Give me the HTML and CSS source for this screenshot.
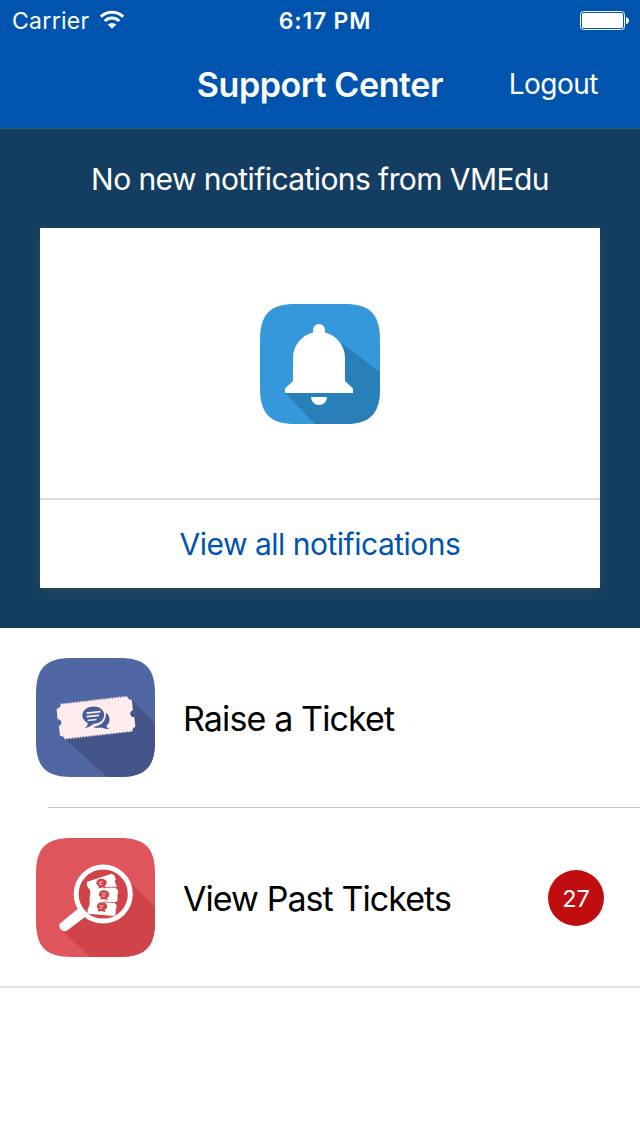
FILE: index.html
```html
<!DOCTYPE html>
<html lang="en">
<head>
<meta charset="utf-8">
<title>Support Center</title>
<link rel="stylesheet" href="styles.css">
</head>
<body>
<header class="header">
  <div class="status">
    <div class="status-left">
      <span class="carrier">Carrier</span>
      <svg class="wifi" width="26" height="20" viewBox="0 0 26 20">
        <path d="M1.8 6.800a16 16 0 0 1 22.400 0M5.700 11a10.500 10.500 0 0 1 14.600 0" fill="none" stroke="#fff" stroke-width="3"/>
        <path d="M13 18.800 8.700 14.600a6.300 6.300 0 0 1 8.600 0Z" fill="#fff"/>
      </svg>
    </div>
    <span class="time">6:17 PM</span>
    <div class="status-right">
      <svg width="50" height="20" viewBox="0 0 50 20">
        <rect x=".5" y=".5" width="44" height="18" rx="3" fill="none" stroke="#fff"/>
        <rect x="2" y="2" width="41" height="15" rx="1.6" fill="#fff"/>
        <path d="M46 6.200c4 .5 4 6.300 0 6.800Z" fill="#fff"/>
      </svg>
    </div>
  </div>
  <nav class="nav">
    <h1 class="title">Support Center</h1>
    <a class="logout">Logout</a>
  </nav>
</header>
<section class="hero">
  <p class="message">No new notifications from VMEdu</p>
  <div class="card">
    <div class="card-body">
      <svg width="120" height="120" viewBox="0 0 120 120">
        <path d="M36 0H84C110 0 120 10 120 36V84C120 110 110 120 84 120H36C10 120 0 110 0 84V36C0 10 10 0 36 0Z" fill="#3598db"/>
        <path d="M80 38 120 68V84C120 110 110 120 84 120H55L25 89Z" fill="#2980b9"/>
        <path d="M53 28.500V26a6 6 0 0 1 12 0v2.500C77 31.500 85 42 85 54V77l8 7.500V89H25V84.500L33 77V54C33 42 41 31.500 53 28.500ZM51 93H67a8 8 0 0 1-16 0Z" fill="#fff"/>
      </svg>
    </div>
    <a class="card-link">View all notifications</a>
  </div>
</section>
<main class="list">
  <div class="row row-first">
    <svg class="row-icon" width="119" height="119" viewBox="0 0 120 120">
      <path d="M36 0H84C110 0 120 10 120 36V84C120 110 110 120 84 120H36C10 120 0 110 0 84V36C0 10 10 0 36 0Z" fill="#5167a4"/>
      <path d="M97 42 120 66V84C120 110 110 120 84 120H72L28 81Z" fill="#445689"/>
      <path d="M25 47 92 39.200q1 3 4.700 3.400l1 10.200q-3.400 1.200-2.500 4.700 1 2.300 4 2.200l1 9.800q-3.400 1-3 4L29 81.300q-1.200-3-4.800-3l-1.100-9.900q3.200-1.100 2.300-4.700-1-2.300-3.700-2L20.800 51.500q4-1 4.200-4.500Z" fill="#ffecec"/>
      <path d="M25 46.700 92 38.900M29 81.500 97 73.500" stroke="#ffecec" stroke-width="1.600" stroke-dasharray="1.500 1.300"/>
      <path d="M70.500 55c4.700 4 5 10 .4 13.500q.6 2 3 2.800-4 .7-7.400-1.200-5 .8-9-.6c9-.9 13.500-6.500 13-14.500Z" fill="#445c9c"/>
      <path d="M58 49c14.400 0 14.400 17 0 17.400q-3.300 3.600-8.700 4.300 3-2.500 3-5C42.800 61 46.300 49 58 49Z" fill="#445c9c"/>
      <path d="m51 55.500 14-1.500M51 59.200l12.500-1.300M52 63l9-1" stroke="#ffecec" stroke-width="1.700"/>
    </svg>
    <span class="row-label">Raise a Ticket</span>
  </div>
  <div class="row row-last">
    <svg class="row-icon" width="119" height="119" viewBox="0 0 120 120">
      <path d="M36 0H84C110 0 120 10 120 36V84C120 110 110 120 84 120H36C10 120 0 110 0 84V36C0 10 10 0 36 0Z" fill="#de555c"/>
      <path d="M96 46 120 70V84C120 110 110 120 84 120H55L27 94 67 56Z" fill="#cf4349"/>
      <circle cx="67.800" cy="56.500" r="27.300" fill="#cf4349" stroke="#fff" stroke-width="5"/>
      <path d="M45 71.500 50 76.500 49 80 31.500 93.300Q28 95 25 92 22 88.500 24.500 86L42.500 71Z" fill="#fff"/>
      <path d="m51.500 44 25-8q.8 1.500 2.500 1.400l1.500 4.400q-1.500 1-.8 2.300l1.800 5.200L55 54.500 54 51.500 52.500 50.500 51.200 47Z" fill="#fff"/>
      <path d="m55.500 50.700 25-.3q.5 1.600 2.300 1.800l-.2 4.500q-1.600.5-.3 2.300l-.3 4.500-1.700 1.200L54 64V61.500L54.500 57Z" fill="#fff"/>
      <path d="m54.500 62.700 24.800 2.300q.3 1.800 2 2.300l-.4 4q-1.500.7-.4 2.300l-.4 3.800-1.700 1.300L53 76.500 51.800 75l.6-4.500 1.200-1.500Z" fill="#fff"/>
      <path d="m68 50.300 12-1M68 64.500l12 .7" stroke="#cf4349" stroke-width=".8"/>
      <g fill="#cf4349">
        <path d="M65 41c7.200-.5 8 5.500 4 7.500l1.400 2-4-.5-3.400.8.3-2.300C58.500 46 61.500 41.300 65 41Z"/>
        <path d="M68 52.700c7 0 7.500 6 3.500 7.800l1 2.200-4.200-1.200-3.700.6.800-2.500C61.500 57.500 64 52.800 68 52.700Z"/>
        <path d="M66 64.700c7 .2 7.300 6.200 3.200 7.700l.9 2.400-4-1.200-4 .4 1-2.500C59.500 69.500 62 64.700 66 64.700Z"/>
      </g>
      <path d="m63.200 44.800 4-.6M63.800 47l3-.4M66.500 56h4M66.500 58.500h3M64 68.300l4 .2M64.200 70.600h3" stroke="#fff" stroke-width=".8"/>
    </svg>
    <span class="row-label row-label-tight">View Past Tickets</span>
    <span class="badge">27</span>
  </div>
</main>
</body>
</html>
```
FILE: styles.css
```css
* { box-sizing: border-box; margin: 0; padding: 0; }
body { width: 640px; height: 1136px; background: #fff; color: #000; font-family: Inter, "Liberation Sans", sans-serif; font-weight: 400; overflow: hidden; }
svg { display: block; }
.header { height: 129px; background: #0054ae; border-bottom: 1px solid #35536f; color: #fff; }
.status { display: grid; grid-template-columns: 1fr auto 1fr; height: 40px; padding: 2px 10px 0 12px; align-items: center; font-size: 23px; line-height: 38px; }
.status-left { display: flex; align-items: center; gap: 9px; }
.carrier { letter-spacing: 0.3px; }
.wifi { margin-top: -2px; }
.time { font-weight: 600; letter-spacing: 0.8px; padding-left: 8px; }
.status-right { display: flex; justify-content: flex-end; }
.nav { display: grid; grid-template-columns: 1fr auto 1fr; height: 88px; align-items: center; }
.title { grid-column: 2; font-size: 34px; font-weight: 600; letter-spacing: -0.4px; }
.logout { font-size: 28px; letter-spacing: -0.5px; padding-right: 42px; justify-self: end; }
.hero { height: 499px; background: #143e61; padding: 24px 40px 40px; }
.message { height: 75px; line-height: 52px; font-size: 30px; letter-spacing: -0.58px; text-align: center; color: #fff; white-space: nowrap; }
.card { height: 360px; background: #fff; box-shadow: 0 4px 12px -1px rgba(110, 100, 80, .3); display: flex; flex-direction: column; }
.card-body { height: 272px; padding-top: 2px; border-bottom: 2px solid #dcdddf; display: flex; align-items: center; justify-content: center; }
.card-link { flex: 1; display: flex; align-items: center; justify-content: center; font-size: 30px; letter-spacing: -0.5px; color: #0054ae; }
.row { display: flex; align-items: center; height: 180px; padding: 0 36px; }
.row-first { padding-bottom: 1px; background: linear-gradient(#c8c7cc, #c8c7cc) 48px 179px / 592px 1px no-repeat; }
.row-last { padding-top: 1px; border-bottom: 2px solid #dedfe0; }
.row-icon { margin-right: 28px; }
.row-label { padding-top: 1px; font-size: 34px; letter-spacing: -0.87px; white-space: nowrap; }
.row-label-tight { letter-spacing: -0.93px; }
.badge { margin-left: auto; padding-top: 1px; width: 56px; height: 56px; border-radius: 50%; background: #c00d10; color: #fff; font-size: 23.5px; display: flex; align-items: center; justify-content: center; }
```
